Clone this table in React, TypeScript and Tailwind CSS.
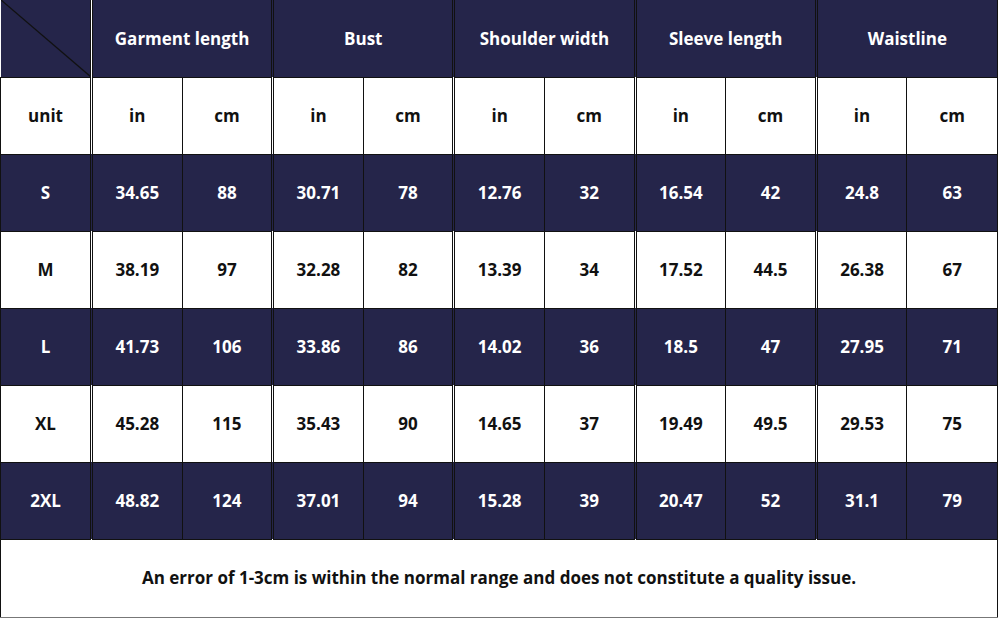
import React from "react";

const GROUPS = ["Garment length", "Bust", "Shoulder width", "Sleeve length", "Waistline"];

const ROWS: [string, string[]][] = [
  ["S", ["34.65", "88", "30.71", "78", "12.76", "32", "16.54", "42", "24.8", "63"]],
  ["M", ["38.19", "97", "32.28", "82", "13.39", "34", "17.52", "44.5", "26.38", "67"]],
  ["L", ["41.73", "106", "33.86", "86", "14.02", "36", "18.5", "47", "27.95", "71"]],
  ["XL", ["45.28", "115", "35.43", "90", "14.65", "37", "19.49", "49.5", "29.53", "75"]],
  ["2XL", ["48.82", "124", "37.01", "94", "15.28", "39", "20.47", "52", "31.1", "79"]],
];

const font = { fontFamily: '"Open Sans", "Noto Sans", sans-serif' };

function Cell({
  children,
  dark,
  groupStart,
}: {
  children: React.ReactNode;
  dark: boolean;
  groupStart?: boolean;
}) {
  return (
    <td
      className={
        "h-[77px] border border-[#111] p-0 text-center text-[17px] font-bold " +
        (dark ? "bg-[#25254a] text-white " : "bg-white text-[#111] ") +
        (groupStart ? "border-l-[3px] border-l-[#111] border-double" : "")
      }
    >
      {children}
    </td>
  );
}

export default function App() {
  return (
    <div className="h-[619px] w-[1000px] bg-white" style={font}>
      <table className="w-[998px] table-fixed border-collapse border-r border-b border-[#777]">
        <colgroup>
          <col className="w-[91px]" />
          {Array.from({ length: 10 }).map((_, i) => (
            <col key={i} />
          ))}
        </colgroup>
        <tbody>
          <tr>
            <td className="relative h-[77px] border border-t-0 border-l-0 border-[#111] bg-[#25254a] p-0">
              <svg className="absolute inset-0 h-full w-full" viewBox="0 0 100 100" preserveAspectRatio="none">
                <line x1="0" y1="0" x2="100" y2="100" stroke="#111" strokeWidth="1.3" vectorEffect="non-scaling-stroke" />
              </svg>
            </td>
            {GROUPS.map((g) => (
              <td
                key={g}
                colSpan={2}
                className="h-[77px] border border-t-0 border-[#111] border-l-[3px] border-double bg-[#25254a] p-0 text-center text-[17px] font-bold text-white"
              >
                {g}
              </td>
            ))}
          </tr>
          <tr>
            <Cell dark={false}>unit</Cell>
            {Array.from({ length: 10 }).map((_, i) => (
              <Cell key={i} dark={false} groupStart={i % 2 === 0}>
                {i % 2 === 0 ? "in" : "cm"}
              </Cell>
            ))}
          </tr>
          {ROWS.map(([size, vals], r) => (
            <tr key={size}>
              <Cell dark={r % 2 === 0}>{size}</Cell>
              {vals.map((v, i) => (
                <Cell key={i} dark={r % 2 === 0} groupStart={i % 2 === 0}>
                  {v}
                </Cell>
              ))}
            </tr>
          ))}
          <tr>
            <td
              colSpan={11}
              className="h-[78px] border border-[#111] border-b-[#777] bg-white p-0 text-center text-[17px] font-bold text-[#111]"
            >
              An error of 1-3cm is within the normal range and does not constitute a quality issue.
            </td>
          </tr>
        </tbody>
      </table>
    </div>
  );
}
